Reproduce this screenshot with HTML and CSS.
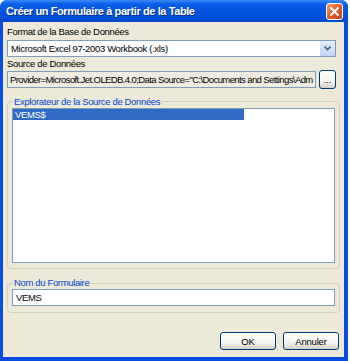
FILE: index.html
```html
<!DOCTYPE html>
<html lang="fr">

<head>
    <meta charset="UTF-8">
    <title>Créer un Formulaire</title>
    <link rel="stylesheet" href="styles.css">
</head>

<body>
    <div class="window">
        <div class="titlebar">
            <span class="title">Créer un Formulaire à partir de la Table</span>
            <button class="close">
                <svg width="11" height="11" viewBox="0 0 11 11">
                    <path d="M1.5 1.5 L9.5 9.5 M9.5 1.5 L1.5 9.5" stroke="#fff" stroke-width="2" />
                </svg>
            </button>
        </div>
        <div class="client">
            <div class="label">Format de la Base de Données</div>
            <div class="combo">
                <span class="value">Microsoft Excel 97-2003 Workbook (.xls)</span>
                <span class="drop">
                    <svg width="7" height="5" viewBox="0 0 7 5">
                        <path d="M0.5 0.5 L3.5 3.5 L6.5 0.5" stroke="#4d6185" stroke-width="1.6" fill="none" />
                    </svg>
                </span>
            </div>
            <div class="label">Source de Données</div>
            <div class="row">
                <div class="textbox grey">Provider=Microsoft.Jet.OLEDB.4.0;Data Source="C:\Documents and Settings\Adm</div>
                <button class="btn small">...</button>
            </div>
            <fieldset class="group explorer">
                <legend>Explorateur de la Source de Données</legend>
                <div class="listbox">
                    <div class="item selected">VEMS$</div>
                </div>
            </fieldset>
            <fieldset class="group name">
                <legend>Nom du Formulaire</legend>
                <div class="textbox">VEMS</div>
            </fieldset>
            <div class="actions">
                <button class="btn">OK</button>
                <button class="btn">Annuler</button>
            </div>
        </div>
    </div>
</body>

</html>
```

FILE: styles.css
```css
body {
    margin: 0;
    font-family: "Liberation Sans", Arial, sans-serif;
    font-size: 9.5px;
    letter-spacing: -0.35px;
    background: #fff;
}

.window {
    width: 348px;
    height: 361px;
    display: flex;
    flex-direction: column;
    background: #0a4be0;
    border-radius: 7px 7px 0 0;
}

.titlebar {
    height: 22px;
    display: flex;
    align-items: center;
    justify-content: space-between;
    padding: 0 5px 0 6px;
    border-radius: 7px 7px 0 0;
    background: linear-gradient(#3c8cf5 0%, #0a5ee8 18%, #0455e0 50%, #0350d8 80%, #0446c8 100%);
}

.title {
    color: #fff;
    font-family: "Liberation Sans", Arial, sans-serif;
    font-weight: bold;
    font-size: 11px;
    letter-spacing: -0.4px;
    text-shadow: 1px 1px #0a2e8c;
}

.close {
    width: 17px;
    height: 17px;
    padding: 0;
    border: 1px solid #fff;
    border-radius: 3px;
    background: linear-gradient(135deg, #f0a080, #e05a2a 50%, #c0401a);
    display: flex;
    align-items: center;
    justify-content: center;
}

.client {
    flex: 1;
    margin: 0 4px 4px 3px;
    background: #ece9d8;
    padding: 3px 8px 0 4px;
    display: flex;
    flex-direction: column;
}

.label {
    height: 13px;
    line-height: 13px;
    color: #000;
}

.combo {
    height: 17px;
    margin: 2px 0 0;
    border: 1px solid #7f9db9;
    background: #fff;
    display: flex;
    align-items: center;
    box-sizing: border-box;
}

.combo .value {
    flex: 1;
    padding-left: 3px;
}

.drop {
    width: 15px;
    height: 15px;
    background: linear-gradient(#e6eefc, #c0d3f8);
    border-left: 1px solid #fff;
    display: flex;
    align-items: center;
    justify-content: center;
}

.row {
    display: flex;
    gap: 3px;
    align-items: center;
    height: 19px;
}

.textbox {
    height: 17px;
    line-height: 15px;
    padding-left: 3px;
    border: 1px solid #7f9db9;
    background: #fff;
    box-sizing: border-box;
    white-space: nowrap;
    overflow: hidden;
}

.textbox.grey {
    flex: 1;
    min-width: 0;
    padding-left: 2px;
    letter-spacing: -0.6px;
    background: #eeebe0;
}

.btn {
    font-family: "Liberation Sans", Arial, sans-serif;
    font-size: 9.5px;
    letter-spacing: -0.2px;
    border: 1px solid #003c74;
    border-radius: 3px;
    background: linear-gradient(#ffffff, #f3f3ee 60%, #d6d0c5);
    padding: 0;
    color: #000;
}

.btn.small {
    width: 17px;
    height: 19px;
    line-height: 10px;
    flex: none;
}

.group {
    margin: 6px -4px 0 0;
    padding: 0 4px 5px;
    border: 1px solid #d0d0bf;
    border-radius: 4px;
}

.group legend {
    color: #0046d5;
    line-height: 13px;
    padding: 0 1px;
    margin-left: 1px;
}

.listbox {
    height: 155px;
    border: 1px solid #7f9db9;
    background: #fff;
    padding: 0;
    box-sizing: border-box;
}

.item {
    height: 11px;
    line-height: 11px;
    width: 229px;
    padding-left: 2px;
}

.item.selected {
    background: #316ac5;
    color: #fff;
}

.name {
    margin-top: 8px;
    padding-bottom: 6px;
}

.name legend {
    line-height: 12px;
}

.actions {
    margin: auto -3px 7px 0;
    display: flex;
    justify-content: flex-end;
    gap: 7px;
}

.actions .btn {
    width: 56px;
    height: 18px;
}
```
